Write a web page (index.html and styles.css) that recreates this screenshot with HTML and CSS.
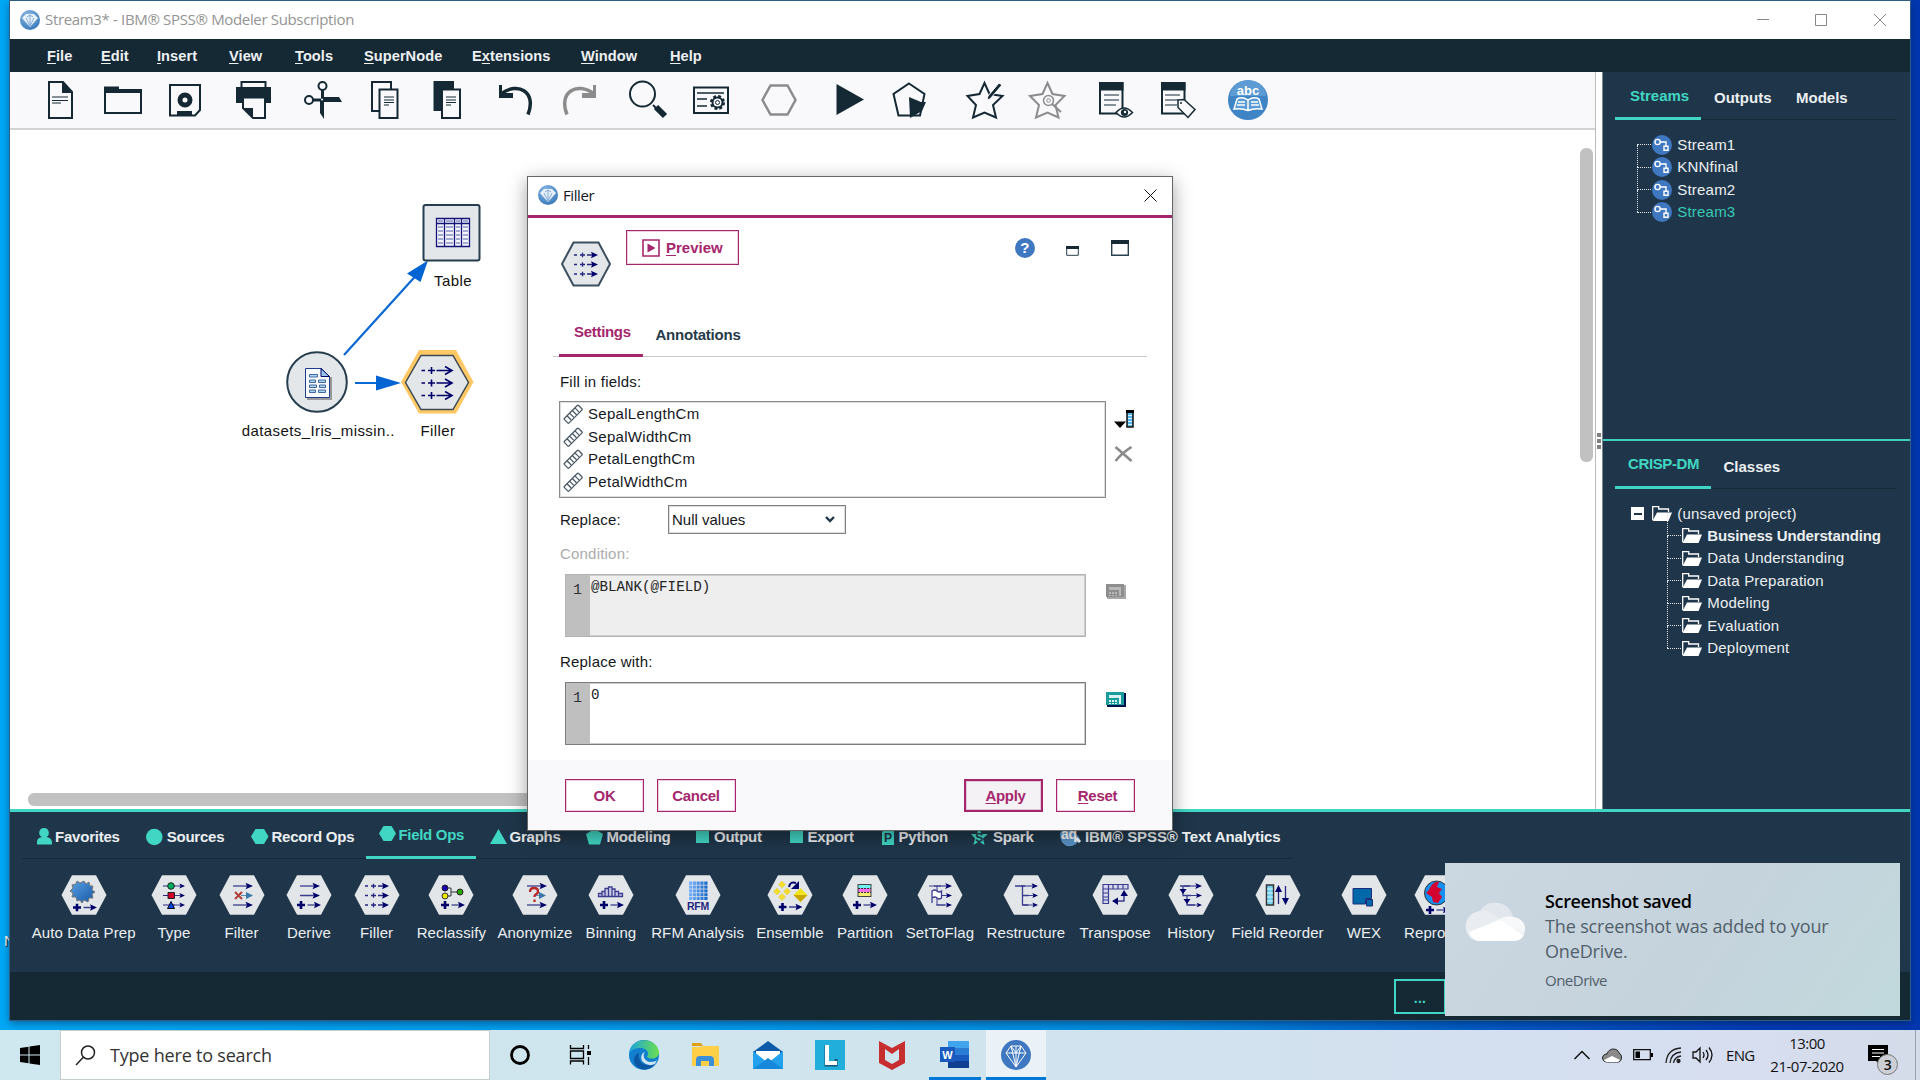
FILE: index.html
```html
<!DOCTYPE html>
<html lang="en">
<head>
<meta charset="utf-8">
<title>Stream3* - IBM SPSS Modeler Subscription</title>
<link rel="stylesheet" href="styles.css">
</head>
<body>
<svg class="defs" width="0" height="0" aria-hidden="true">
  <defs>
    <radialGradient id="ball" cx=".4" cy=".3" r=".8"><stop offset="0" stop-color="#8fbbe6"/><stop offset="1" stop-color="#2f72b4"/></radialGradient>
    <linearGradient id="gearfill" x1="0" y1="0" x2="1" y2="1"><stop offset="0" stop-color="#5aa0e0"/><stop offset="1" stop-color="#1558a8"/></linearGradient>
    <linearGradient id="edgefill" x1="0" y1="0" x2="1" y2="0"><stop offset="0" stop-color="#1ba2dd"/><stop offset="1" stop-color="#6be04e"/></linearGradient>
    <linearGradient id="cellfill" x1="0" y1="0" x2="1" y2="0"><stop offset="0" stop-color="#78b4ff"/><stop offset="1" stop-color="#1666c8"/></linearGradient>
  </defs>
  <symbol id="logo" viewBox="0 0 20 20"><circle cx="10" cy="10" r="10" fill="url(#ball)"/><path d="M6 4h8l4 4-8 9-8-9z" fill="#e8f1fa"/><path d="M6 8l4 8 4-8M10 5v10M7 7l3-2 3 2" fill="none" stroke="#7eaad6"/></symbol>
  <symbol id="hex" viewBox="0 0 46 40"><path d="M.5 20L11 .2h24L45.500 20 35 39.800H11z" fill="#e3e6e9"/></symbol>
  <symbol id="arr" viewBox="0 0 20 8"><path d="M0 4h14" stroke="#3d3d8f" stroke-width="1.300"/><path d="M12.500 .8L20 4l-7.500 3.200 1.500-3.200z" fill="#00006b"/></symbol>
  <symbol id="dasharr" viewBox="0 0 24 8"><path d="M0 4h3M6 4h5M8.500 1.800v4.400M13 4h6" stroke="#26267f" stroke-width="1.300"/><path d="M17 .8L24 4l-7 3.200 1.200-3.200z" fill="#00006b"/></symbol>
  <symbol id="plusarr" viewBox="0 0 24 8"><path d="M0 4h8M4 0v8" stroke="#00006b" stroke-width="2.600"/><path d="M10.500 4h9" stroke="#3d3d8f" stroke-width="1.300"/><path d="M17 .8L24 4l-7 3.200 1.200-3.200z" fill="#00006b"/></symbol>
  <symbol id="stream" viewBox="0 0 20 20"><circle cx="10" cy="10" r="10" fill="#3f78c0"/><g fill="none" stroke="#fff" stroke-width="1.400"><circle cx="5.600" cy="7" r="2.600"/><path d="M8.300 7H14v4M12 11.300h4v4h-4z"/></g></symbol>
  <symbol id="folder" viewBox="0 0 20 15"><path d="M.7 14V.7h6V3h9.800v3" fill="none" stroke="#fff" stroke-width="1.300"/><path d="M5 6.500h15L16.500 15H.5z" fill="#fff"/></symbol>
  <symbol id="ruler" viewBox="0 0 20 20"><g transform="rotate(-45 10 10)" fill="none" stroke="#4a5a66" stroke-width="1.300"><rect x="0" y="7" width="20" height="6.500" rx="1"/><path d="M4.500 7v6M8.200 7v6M12 7v6M15.700 7v6"/></g></symbol>
  <symbol id="calc" viewBox="0 0 20 15"><path d="M1 1h19v14H1z" fill="var(--edge)"/><path d="M0 0h18v13H0z" fill="var(--face)"/><path d="M3 3h10v3H3z" fill="var(--lcd)"/><path d="M3 8h2v2H3zm3 0h2v2H6zm3 0h2v2H9zm4-5h2v9h-2zM3 11h2v1H3zm3 0h2v1H6zm3 0h2v1H9z" fill="var(--lcd)"/></symbol>
</svg>

<span class="desktop-label">N</span>
<div class="window">
  <header class="titlebar">
    <svg width="20" height="20"><use href="#logo"/></svg>
    <span class="title">Stream3* - IBM® SPSS® Modeler Subscription</span>
    <svg class="winctl" width="130" height="14" fill="none" stroke="#888"><path d="M0 6.500h12M58.500 1.500h11v11h-11zM117 1l12 12M129 1l-12 12"/></svg>
  </header>
  <nav class="menu"><span><u>F</u>ile</span><span><u>E</u>dit</span><span><u>I</u>nsert</span><span><u>V</u>iew</span><span><u>T</u>ools</span><span><u>S</u>uperNode</span><span>E<u>x</u>tensions</span><span><u>W</u>indow</span><span><u>H</u>elp</span></nav>

  <div class="work">
    <main class="left">
      <div class="toolbar">
        <svg viewBox="0 0 40 40"><path d="M9 2h14l9 10v26H9z" class="ln"/><path d="M22 1l10 12H22z" class="fl"/><path d="M12 17h16M12 20.500h16M12 23h9" class="thin"/></svg>
        <svg viewBox="0 0 40 40"><path d="M3 10h36v23H3z" class="ln"/><path d="M2 6.500h15v4.500H2zM2 9.500h37V13H2z" class="fl"/></svg>
        <svg viewBox="0 0 40 40"><path d="M5 5h30v25l-5 5.500H5z" class="ln"/><circle cx="20" cy="20" r="5" fill="none" class="ring"/><path d="M12 31h15v4H12z" class="fl"/></svg>
        <svg viewBox="0 0 40 40"><path d="M2 7h35v16H2z" class="fl"/><path d="M7.500 2h24v6h-24zM9 17.500h22v20.500H19L9 28z" class="pn"/><path d="M9 28h10v10z" class="fl"/></svg>
        <svg viewBox="0 0 40 40"><circle cx="20.500" cy="6" r="4" class="ln"/><circle cx="7" cy="20" r="4" class="ln"/><path d="M19 10h3v7h15l3 5H22v17l-4-6V21.500h-7v-3h8z" class="fl"/><circle cx="20" cy="19.500" r="1" fill="#fff"/></svg>
        <svg viewBox="0 0 40 40"><path d="M7 2h19v29H7z" class="ln"/><path d="M14.500 9.500h18V38h-18z" class="pn"/><path d="M19 17h10M19 20h10M19 22.500h10M19 25h5" class="thin"/></svg>
        <svg viewBox="0 0 40 40"><path d="M5.500 1H26v30H5.500z" class="fl"/><path d="M14 9.500h18V38H14z" class="pn"/><path d="M18 17h10M18 20h10M18 22.500h10M18 25h5" class="thin"/></svg>
        <svg viewBox="0 0 40 40"><path d="M5 14C22 1 41 12 32 34.500" class="ln arc"/><path d="M3 5h3v8h11v5H3z" class="fl"/></svg>
        <svg viewBox="0 0 40 40" class="off"><path d="M35 14C18 1-1 12 8 34.500" class="ln arc"/><path d="M37 5h-3v8H23v5h14z" class="fl"/></svg>
        <svg viewBox="0 0 40 40"><circle cx="14.500" cy="14" r="12.500" class="ln"/><path d="M25 25l3 3" class="ln"/><path d="M28 27l9 9" stroke="#152935" stroke-width="6"/></svg>
        <svg viewBox="0 0 40 40"><path d="M3 7.500h34v25.500H3z" class="ln"/><path d="M6 13h27M6 19h10M6 26h10" class="thin wide"/><circle cx="26.500" cy="22.500" r="6" class="gear"/><circle cx="26.500" cy="22.500" r="5" class="ln"/><circle cx="26.500" cy="22.500" r="2" class="thin"/></svg>
        <svg viewBox="0 0 40 40" class="off"><path d="M3.500 20L11.500 5.500h17l8 14.500-8 14.500h-17z" class="ln hexagon"/></svg>
        <svg viewBox="0 0 40 40"><path d="M6.500 4L34 19.500 6.500 35z" class="fl"/></svg>
        <svg viewBox="0 0 40 40"><path d="M20 3.500l15.500 10.500L31 35.500H9.500L4.500 14z" class="ln"/><path d="M20 17l12 5h5l-4 9-12 7z" class="fl"/></svg>
        <svg viewBox="0 0 40 40"><path d="M19.500 3l5 11 13 2-9.500 9 3 12.500-11.500-5-11.500 5 3-12.500L2.500 16l12-2z" class="ln"/><path d="M37 5L25 19l-3 1 1-4L34 3z" class="fl" stroke="#f9f9fb"/></svg>
        <svg viewBox="0 0 40 40" class="off"><path d="M20.500 3l5 11 12 2-9 9 3 12.500-11-5-11.500 5 3-12.500L3 16l12.500-2z" class="ln"/><circle cx="21.500" cy="20.500" r="5" class="pn soft"/><circle cx="21.500" cy="20.500" r="1.800" class="thin"/><path d="M25 24l9 8" class="ln"/></svg>
        <svg viewBox="0 0 40 40"><path d="M4 3.500h22.500v30H4z" class="ln"/><path d="M3 2h24.500v8.500H3z" class="fl"/><path d="M8 15h15M8 20h15M8 25h12" class="thin"/><path d="M20 32.500q8-9 16.500 0-8.500 9-16.500 0z" class="pn soft"/><circle cx="28.500" cy="32.500" r="3.600" class="fl"/><circle cx="29" cy="32" r="1.200" fill="#fff"/></svg>
        <svg viewBox="0 0 40 40"><path d="M3 3.500h22.500v30H3z" class="ln"/><path d="M2 2h24.500v8.500H2z" class="fl"/><path d="M6 15h15M6 20h13M6 25h12" class="thin"/><path d="M19 20l6-.5 11 10-7 8-10-10z" class="pn soft"/><circle cx="22" cy="23" r="1" class="fl"/></svg>
        <svg viewBox="0 0 40 40"><circle cx="20" cy="20" r="20" fill="#3f84c4"/><path d="M2 16C4-5 36-5 38 16z" fill="#6aa5dc" opacity=".7"/><text x="20" y="14.500" class="abc">abc</text><path d="M20 20q-6-4-11-1L6 29q8-1 14 1.500Q26 28 34 29l-3-10q-5-3-11 1v10M10 22h7M9 25h8M23 22h7M23 25h8" fill="#5a9ad6" stroke="#fff" stroke-width="1.500"/></svg>
      </div>
      <div class="canvas">
        <svg class="graph" width="560" height="400" viewBox="0 130 560 400">
          <g transform="translate(-10 0)">
          <path d="M344 355L421 270M355 383h25" stroke="#0a68d2" stroke-width="2.200"/>
          <path d="M428 260.500l-7.500 21.500-13.500-8.500zM401 383l-25-7.500v15z" fill="#0064d2"/>
          <rect x="423.500" y="205" width="56" height="55.500" rx="2" fill="#e3e7ea" stroke="#263e4e" stroke-width="2"/>
          <path d="M436.500 218.500h33v28h-33zM436.500 223.500h33M444.500 218.500v28M454.500 218.500v28M461.500 218.500v28" fill="#f4f5fc" stroke="#14147a" stroke-width="1.300"/>
          <path d="M438 221h5M446 221h7M456 221h4M463 221h5M438 227h5M446 227h7M456 227h4M463 227h5M438 231h5M446 231h7M456 231h4M463 231h5M438 235h5M446 235h7M456 235h4M463 235h5M438 239h5M446 239h7M456 239h4M463 239h5M438 243h5M446 243h7M456 243h4M463 243h5" stroke="#5060a8" stroke-width="1.200"/>
          <circle cx="317" cy="382" r="29.800" fill="#e3e7ea" stroke="#263e4e" stroke-width="2"/>
          <path d="M307 399h24v-22" fill="none" stroke="#999" stroke-width="2"/>
          <path d="M305.500 368.500h16l8 8v21h-24z" fill="#f8fafe" stroke="#1c3c8c"/><path d="M321 368.500v8h8.500z" fill="#9ac4ee" stroke="#00006b"/>
          <path d="M309.500 374.500h8v2.500h-8zM309.500 380h6v2.500h-6zM318.500 380h7v2.500h-7zM309.500 385h7v2.500h-7zM319.500 385h6v2.500h-6zM309.500 390h6v2.500h-6zM318.500 390h7v2.500h-7z" fill="#aad4f4" stroke="#44689c"/>
          <path d="M401 382l18-32h37l17.500 32-17.500 31.500h-37z" fill="#ffc864"/>
          <path d="M405.500 382.500l15.500-27h32l15.500 27-15.500 27h-32z" fill="#e3e7ea" stroke="#3c4a54" stroke-width="1.500"/>
          <g fill="none" stroke="#00006b" stroke-width="1.600"><path d="M421.500 370.500h3.500M428 370.500h7M431.500 367v7M436.500 370.500h14M445 366.500l7 4-7 4"/><path d="M421.500 383h3.500M428 383h7M431.500 379.500v7M436.500 383h14M445 379l7 4-7 4M421.500 395.500h3.500M428 395.500h7M431.500 392v7M436.500 395.500h14M445 391.500l7 4-7 4"/></g>
          <g class="nodelabels"><text x="453" y="286">Table</text><text x="318.300" y="436">datasets_Iris_missin..</text><text x="438" y="436">Filler</text></g>
          </g>
        </svg>
        <i class="vscroll"></i><i class="hscroll"></i>
      </div>
    </main>
    <div class="splitter"><i></i><i></i><i></i></div>
    <aside class="side">
      <section class="pane">
        <div class="tabs side-tabs streams-tabs"><span class="on">Streams</span><span>Outputs</span><span>Models</span></div>
        <ul class="tree flat">
          <li><svg width="20" height="20"><use href="#stream"/></svg>Stream1</li>
          <li><svg width="20" height="20"><use href="#stream"/></svg>KNNfinal</li>
          <li><svg width="20" height="20"><use href="#stream"/></svg>Stream2</li>
          <li class="cur"><svg width="20" height="20"><use href="#stream"/></svg>Stream3</li>
        </ul>
      </section>
      <section class="pane project">
        <div class="tabs side-tabs crisp-tabs"><span class="on">CRISP-DM</span><span>Classes</span></div>
        <div class="root"><i class="minus"></i><svg width="20" height="15"><use href="#folder"/></svg>(unsaved project)</div>
        <ul class="tree nested">
          <li class="strong"><svg width="20" height="15"><use href="#folder"/></svg>Business Understanding</li>
          <li><svg width="20" height="15"><use href="#folder"/></svg>Data Understanding</li>
          <li><svg width="20" height="15"><use href="#folder"/></svg>Data Preparation</li>
          <li><svg width="20" height="15"><use href="#folder"/></svg>Modeling</li>
          <li><svg width="20" height="15"><use href="#folder"/></svg>Evaluation</li>
          <li><svg width="20" height="15"><use href="#folder"/></svg>Deployment</li>
        </ul>
      </section>
    </aside>
  </div>

  <section class="palette">
    <div class="ptabs">
      <span><svg width="18" height="18"><path d="M7 0c6 0 6 8 2.500 9 5 1 5.500 3 5.500 7.500H0C0 12 0 10 5 9 1 8 1 0 7 0z"/></svg>Favorites</span>
      <span><svg width="21" height="18"><circle cx="8.300" cy="9" r="8.300"/></svg>Sources</span>
      <span><svg width="20.500" height="18"><path d="M0 8.500L4.500 1H13l4.500 7.500L13 16H4.500z"/></svg>Record Ops</span>
      <span class="on"><svg width="19.500" height="18"><path d="M0 8.500L4.500 1H12.500l4.500 7.500L12.500 16H4.500z"/></svg>Field Ops</span>
      <span><svg width="19.500" height="18"><path d="M0 16L8.500 1 17 16z"/></svg>Graphs</span>
      <span><svg width="20" height="18"><path d="M0 6L8.500 1 17 6l-3 10.500H3z"/></svg>Modeling</span>
      <span><svg width="18" height="18"><path d="M0 2h13v13H0z"/></svg>Output</span>
      <span><svg width="17.500" height="18"><path d="M0 2h13v13H0z"/></svg>Export</span>
      <span><svg width="16.500" height="18"><path d="M0 4l3-3h9v16H0z"/><text x="6" y="14" class="mini">P</text></svg>Python</span>
      <span><svg width="22" height="18"><path d="M8 0l2.500 6H17l-5 4.500 1.500 6.500L8 13.500 2.500 17 4 10.500 0 6h6z"/><text x="8.200" y="13.500" class="mini">S</text></svg>Spark</span>
      <span class="ta"><svg width="25" height="20"><path d="M0 5q5-7 12-2t8 8l-4 5q-6 4-11 1T0 5z" style="fill:#5b93c8"/><text x="9" y="11" class="mini a">aq</text><path d="M16 10l4 4" stroke="#fff" stroke-width="3"/></svg>IBM® SPSS® Text Analytics</span>
    </div>
    <div class="nodes">
      <figure><svg><use href="#hex"/><path d="M23 6l2 3 3-2 1 4 3 0-1 4 3 2-3 2 1 4-4 0-1 4-4-2-2 3-2-3-3 1-1-4-4 0 1-4-3-2 3-3-1-3 4-1 1-3 3 2z" fill="url(#gearfill)" stroke="#777"/><use href="#plusarr" x="12" y="28.500" width="24" height="8"/></svg>Auto Data Prep</figure>
      <figure><svg><use href="#hex"/><path d="M12 11h12M12 20.500h12M12 30h12" stroke="#26267f"/><use href="#arr" x="19" y="7" width="15" height="8"/><use href="#arr" x="19" y="16.500" width="15" height="8"/><use href="#arr" x="19" y="26" width="15" height="8"/><circle cx="20" cy="11" r="3.300" fill="#00b060" stroke="#222"/><path d="M17 17.500h6.500v6H17z" fill="#d4002c" stroke="#222"/><path d="M16.500 33.500l3.500-7 3.500 7z" fill="#0048d8" stroke="#002"/></svg>Type</figure>
      <figure><svg><use href="#hex"/><use href="#arr" x="14" y="7" width="20" height="8"/><use href="#arr" x="14" y="26" width="20" height="8"/><path d="M22 20.500h8" stroke="#5590bb"/><path d="M27 17l7 3.500-7 3.500z" fill="#3a78a8"/><path d="M16 17l7 7M23 17l-7 7" stroke="#b0403c" stroke-width="2"/></svg>Filter</figure>
      <figure><svg><use href="#hex"/><use href="#arr" x="14" y="7" width="20" height="8"/><use href="#arr" x="14" y="16.500" width="20" height="8"/><use href="#plusarr" x="11" y="26" width="24" height="8"/></svg>Derive</figure>
      <figure><svg><use href="#hex"/><use href="#dasharr" x="11" y="7" width="24" height="8"/><use href="#dasharr" x="11" y="16.500" width="24" height="8"/><use href="#dasharr" x="11" y="26" width="24" height="8"/></svg>Filler</figure>
      <figure><svg><use href="#hex"/><path d="M18 13h5v8h-5M23 17h10" stroke="#333" fill="none"/><circle cx="17" cy="13" r="3" fill="#1800b0" stroke="#222"/><circle cx="17" cy="21" r="3" fill="#f0e800" stroke="#333"/><circle cx="32" cy="17" r="3" fill="#28a800" stroke="#222"/><use href="#plusarr" x="13" y="26" width="24" height="8"/></svg>Reclassify</figure>
      <figure><svg><use href="#hex"/><use href="#arr" x="15" y="7" width="20" height="8"/><use href="#arr" x="15" y="26" width="20" height="8"/><path d="M23 20.500h5" stroke="#5590bb"/><path d="M27 17l7 3.500-7 3.500z" fill="#3a78a8"/><path d="M18 17q0-4 4-4t4 3.500q0 2-2.500 3-1 .5-1 2.500M22.500 24.500v2.500" stroke="#b82828" stroke-width="2.300" fill="none"/></svg>Anonymize</figure>
      <figure><svg><use href="#hex"/><path d="M10.500 21.500v-3H14v-2h3v-3h3.500v-1.500H24V14h3v2.500h3.500v2h4v3zM14 18v3.500M17 16v5M20.500 14v7M24 14v7M27 16v5M30.500 18v3" fill="#c9cae6" stroke="#3d3d8f" stroke-width="1.300"/><use href="#plusarr" x="12" y="26" width="24" height="8"/></svg>Binning</figure>
      <figure><svg><use href="#hex"/><path d="M14 6.500h18.500v18.500H14z" fill="url(#cellfill)"/><path d="M17.500 6v20M21.300 6v20M25 6v20M28.800 6v20M13 10.200h20M13 14h20M13 17.800h20M13 21.500h20" stroke="#e3e6e9" stroke-width=".7"/><text x="23" y="35" class="rfm">RFM</text></svg>RFM Analysis</figure>
      <figure><svg><use href="#hex"/><path d="M15 6l3.500 3.500L15 13l-3.500-3.500zM10 13l3.500 3.500L10 20l-3.500-3.500zM20 13l3.500 3.500L20 20l-3.500-3.500zM15 18.500l3.500 3.500-3.500 3.500-3.500-3.500z" fill="#f4dc2c" stroke="#e8d868"/><path d="M33.500 13l7 7-7 7-7-7z" fill="#f2e420"/><path d="M26.500 20h14l-7 7z" fill="#c8a800"/><path d="M22 12q1-6 7-4" fill="none" stroke="#00006b" stroke-width="2"/><path d="M32 6v8h-8z" fill="#00006b"/><use href="#plusarr" x="11.500" y="28" width="24" height="8"/></svg>Ensemble</figure>
      <figure><svg><use href="#hex"/><path d="M16 9h13v4H16z" fill="#70f0f0"/><path d="M16 13h13v4H16z" fill="#f070e8"/><path d="M16 17h13v4.500H16z" fill="#f8ee70"/><path d="M16 9.500h13M16 21.500h13M16 9v13M29 9v13" stroke="#444"/><path d="M16 13.500h13M16 17.500h13" stroke="#333" stroke-dasharray="2 1"/><use href="#plusarr" x="11" y="26" width="24" height="8"/></svg>Partition</figure>
      <figure><svg><use href="#hex"/><path d="M12 11h12M20 11v19h8" stroke="#3d3d8f" fill="none"/><use href="#arr" x="17" y="7" width="18" height="8"/><use href="#arr" x="19" y="16.500" width="16" height="8"/><use href="#arr" x="19" y="26" width="16" height="8"/><path d="M15 28V16q3-2 5 0t4.500 0v7q-2.500 2-4.500 0t-5 0" fill="#fff" stroke="#3d3d8f" stroke-width="1.300"/></svg>SetToFlag</figure>
      <figure><svg><use href="#hex"/><path d="M12 11h10M19.500 11v19h6M19.500 20.500h6" stroke="#3d3d8f" stroke-width="1.300" fill="none"/><use href="#arr" x="18" y="7" width="17" height="8"/><use href="#arr" x="20" y="16.500" width="15" height="8"/><use href="#arr" x="20" y="26" width="15" height="8"/></svg>Restructure</figure>
      <figure><svg><use href="#hex"/><path d="M11 9.500h25V14H16.500v14.500H11zM11 14h6M11 18h6M11 22h6M11 25h6M16.500 9.500V14M21 9.500V14M26 9.500V14M31 9.500V14" fill="#d6d6ee" stroke="#3d3d8f" stroke-width="1.200"/><path d="M32 17v9H22" fill="none" stroke="#3d3d8f" stroke-width="1.500"/><path d="M28.500 21l3.500-6 4 6zM26 22.500V30l-6-4z" fill="#00006b"/></svg>Transpose</figure>
      <figure><svg><use href="#hex"/><path d="M12 11h10M15 11v9.500h8M19 21v9h8" stroke="#3d3d8f" stroke-width="1.300" fill="none"/><path d="M11.500 14h7L15 19zM15.500 24h7L19 29z" fill="#00006b"/><use href="#arr" x="16" y="7" width="18" height="8"/><use href="#arr" x="18" y="16.500" width="16" height="8"/><use href="#arr" x="20" y="26" width="14" height="8"/></svg>History</figure>
      <figure><svg><use href="#hex"/><path d="M11.500 10h7v20h-7z" fill="#78d2ee" stroke="#333" stroke-width="1.500"/><path d="M12 14h6M12 18h6M12 22h6M12 26h6" stroke="#d4f4fc"/><path d="M23.500 29V13M30.500 11v15" stroke="#26267f" stroke-width="1.300"/><path d="M20 17l3.500-7 3.500 7zM27 23l3.500 7 3.500-7z" fill="#00006b"/></svg>Field Reorder</figure>
      <figure><svg><use href="#hex"/><path d="M12 13.500h18.500v10h-6V29H12z" fill="#0068a8" stroke="#1c2c78"/><path d="M25.500 24.500h6v6.500h-6z" fill="#0068a8" stroke="#1c2c78"/></svg>WEX</figure>
      <figure><svg><use href="#hex"/><circle cx="22.500" cy="18" r="12" fill="#1490f0" stroke="#333"/><path d="M12 18q3-2 5-7 4-5 8-4l-2 5 5 2-3 4 3 4-4 6-5-1-1-5z" fill="#d40030"/><use href="#plusarr" x="12" y="31" width="24" height="8"/></svg>Reproject</figure>
    </div>
  </section>
  <footer class="status"><span class="more">...</span></footer>
</div>

<div class="dialog">
  <header><svg width="20" height="20"><use href="#logo"/></svg><span class="title">Filler</span><svg class="x" width="13" height="13"><path d="M.5.5l12 12M12.500.5l-12 12" stroke="#111"/></svg></header>
  <div class="dhead">
    <svg class="dhex" width="50" height="46" viewBox="0 0 50 46"><path d="M1 23L12.500 1.500h25L49 23 37.500 44.500h-25z" fill="#e3e7ea" stroke="#3c5060" stroke-width="2"/><use href="#dasharr" x="13" y="10" width="24" height="8"/><use href="#dasharr" x="13" y="19.500" width="24" height="8"/><use href="#dasharr" x="13" y="29" width="24" height="8"/></svg>
    <button class="preview"><svg width="18" height="18"><path d="M1 1h16v16H1z" fill="none" stroke="#a6266e" stroke-width="1.600"/><path d="M5.500 4.500l8 4.500-8 4.500z" fill="#a6266e"/></svg><span><u>P</u>review</span></button>
    <span class="help">?</span>
    <svg class="min" width="13" height="10"><path d="M.7.7h11.600v8.600H.7z" fill="#fff" stroke="#2a4050"/><path d="M0 0h13v3H0z" fill="#152935"/></svg>
    <svg class="max" width="18" height="16"><path d="M.7.7h16.600v14.600H.7z" fill="#fff" stroke="#2a4050" stroke-width="1.400"/><path d="M0 0h18v4H0z" fill="#152935"/></svg>
  </div>
  <div class="tabs dtabs"><span class="on">Settings</span><span>Annotations</span></div>
  <div class="dbody">
    <label>Fill in fields:</label>
    <div class="row fields">
      <ul class="list">
        <li><svg width="20" height="20"><use href="#ruler"/></svg>SepalLengthCm</li>
        <li><svg width="20" height="20"><use href="#ruler"/></svg>SepalWidthCm</li>
        <li><svg width="20" height="20"><use href="#ruler"/></svg>PetalLengthCm</li>
        <li><svg width="20" height="20"><use href="#ruler"/></svg>PetalWidthCm</li>
      </ul>
      <div class="tools">
        <svg width="20" height="18"><path d="M0 11.500h12L6 18z"/><path d="M13 1h6v16h-6z" fill="#58b8ec" stroke="#111" stroke-width="1.500"/><path d="M12 0h8v3h-8z"/><path d="M14 5.500h4M14 8.500h4M14 11.500h4M14 14.500h4" stroke="#d8f0fc"/></svg>
        <svg width="19" height="16"><path d="M1.500 1q7 6 16 14M17.500 1Q8 7 1.500 15" fill="none" stroke="#8a8a8a" stroke-width="2.600"/></svg>
      </div>
    </div>
    <div class="row replace"><label>Replace:</label><div class="select">Null values<svg width="10" height="7"><path d="M1 1l4 4 4-4" fill="none" stroke="#20384a" stroke-width="2.400"/></svg></div></div>
    <label class="dis">Condition:</label>
    <div class="row code-row"><div class="code off"><b>1</b><code>@BLANK(@FIELD)</code></div><svg class="calc gray" width="20" height="15"><use href="#calc"/></svg></div>
    <label class="with">Replace with:</label>
    <div class="row code-row second"><div class="code"><b>1</b><code>0</code></div><svg class="calc" width="20" height="15"><use href="#calc"/></svg></div>
  </div>
  <footer><button>OK</button><button>Cancel</button><button class="apply"><span><u>A</u>pply</span></button><button class="reset"><span><u>R</u>eset</span></button></footer>
</div>

<div class="toast">
  <svg width="60" height="40"><path d="M15 39C-4 39-4 11 15 9 23-4 44-1 48 15c16 1 16 24 0 24z" fill="#e9edf1"/><path d="M15 9q8-2 15 5l18 12L48 15C44-1 23-4 15 9z" fill="#e1e7ec"/><path d="M4 30l29-12q6-5 15-3 15 3 11 16L33 19z" fill="#f6f8fa"/><path d="M4 30l31-12 24 15q-3 6-11 6H15Q7 39 4 30z" fill="#fff"/></svg>
  <div><h2>Screenshot saved</h2><p>The screenshot was added to your<br>OneDrive.</p><small>OneDrive</small></div>
</div>

<footer class="taskbar">
  <svg class="start" width="20" height="20"><path d="M0 3l8.500-1.200v7.700H0zM9.500 1.600L20 0v9.500H9.500zM0 10.500h8.500v7.700L0 17zM9.500 10.500H20V20L9.500 18.400z"/></svg>
  <div class="search"><svg width="21" height="21"><circle cx="13" cy="7.500" r="6.500" fill="none" stroke="#222" stroke-width="1.500"/><path d="M8.500 12L1 20" stroke="#222" stroke-width="1.500"/></svg>Type here to search</div>
  <div class="apps">
    <svg viewBox="0 0 30 30"><circle cx="15" cy="15" r="8.500" fill="none" stroke="#000" stroke-width="2.800"/></svg>
    <svg viewBox="0 0 30 30"><path d="M5.500 5v3.500h13V5M5.500 24.500V21h13v3.500M5.500 11h13v7.500h-13zM23.500 5v4M23.500 17v8" fill="none" stroke="#000" stroke-width="1.300"/><path d="M22 11h4v4h-4z"/></svg>
    <svg viewBox="0 0 30 30"><circle cx="15" cy="15" r="15" fill="#127fce"/><path d="M0 14C1-4 28-4 30 12c0 7-8 8-12 5 3-5-1-9-7-9C6 8 2 10 0 14z" fill="url(#edgefill)"/><path d="M10 13c-2 9 6 15 16 11-8 10-22 5-21-5q1-5 5-6z" fill="#0c57a4"/><path d="M16 12c-3 3-1 9 5 10 4 0 6-1 7-2l-2 4q-7 3-12-2c-3-3-2-9 2-10z" fill="#d0e4f0"/></svg>
    <svg viewBox="0 0 30 30"><path d="M2 4q0-1 1-1h8l2 3H2z" fill="#e0a010"/><path d="M2 7h9l2-1h16v20H2z" fill="#ffcf48"/><path d="M6 26v-6q0-4 4-4h10q4 0 4 4v6h-5v-5h-8v5z" fill="#3b8ed8"/></svg>
    <svg viewBox="0 0 30 30"><path d="M0 12L15 1l15 11v17H0z" fill="#0c5aaa"/><path d="M3 11h24v10H3z" fill="#fff"/><path d="M0 11l15 12 15-12v18H0z" fill="#22a2ec"/><path d="M0 29l15-11 15 11z" fill="#1688dc"/></svg>
    <svg viewBox="0 0 30 30"><path d="M0 0h30v30H0z" fill="#22aedb"/><path d="M11 5v20h10v-6" fill="none" stroke="#155878" stroke-width="3"/><path d="M10 5h4v16h8v4H10z" fill="#fff"/></svg>
    <svg viewBox="0 0 30 30"><path d="M2 1l13 7 13-7v22l-13 7-13-7zM8 9v11l7 4 7-4V9l-7 5z" fill="#c62e30" fill-rule="evenodd"/></svg>
    <svg viewBox="0 0 30 30"><path d="M8 1h20q1 0 1 1v7H8z" fill="#41a5ee"/><path d="M8 8h21v7H8z" fill="#2b7cd3"/><path d="M8 15h21v6H8z" fill="#185abd"/><path d="M8 21h21v7H8z" fill="#103f91"/><path d="M0 7h15v15H0z" fill="#185abd"/><text x="7.500" y="19" class="w">W</text></svg>
    <svg viewBox="0 0 30 30"><circle cx="15" cy="15" r="15" fill="#3f78c0"/><path d="M10 6h10l5 7-10 14L5 13zM5 13h20M10 6l5 21 5-21M15 6v21M10 6l5 7 5-7" fill="none" stroke="#fff" stroke-width="1"/></svg>
  </div>
  <div class="tray">
    <svg width="16" height="10"><path d="M.5 9L8 1.500 15.500 9" fill="none" stroke="#111" stroke-width="1.500"/></svg>
    <svg width="20" height="15"><path d="M5 14C-1 14-1 6 5 6c2-7 11-6 12-1 4 2 3 9-1 9z" fill="#8a8a8a" stroke="#222"/><path d="M2 12l8-4 8 4q-1 2-3 2H5q-2 0-3-2z" fill="#fff"/></svg>
    <svg width="20" height="12"><path d="M.7.7h16.600v10H.7z" fill="none" stroke="#111" stroke-width="1.300"/><path d="M2.500 2.500h4.500v6.500H2.500zM18 4h2v4h-2z"/></svg>
    <svg width="17" height="17" fill="none" stroke="#222" stroke-width="1.300"><path d="M1 16Q2 2 16 1M5 16q1-10 11-11M8.500 16q1-6 7.500-7"/><circle cx="13.500" cy="14" r="1.500" fill="#111"/></svg>
    <svg width="22" height="18" fill="none" stroke="#111" stroke-width="1.300"><path d="M1 6h3l4-4v14l-4-4H1zM11 6q2 3 0 6M14 4q4 5 0 10M17 1.500q6 7.500 0 15"/></svg>
    <span class="eng">ENG</span>
    <div class="clock"><span>13:00</span><span>21-07-2020</span></div>
    <div class="action"><svg width="21" height="21"><path d="M0 0h20v16h-7v5l-5-5H0z"/><path d="M4 4.500h12M4 8h12M4 11.500h8" stroke="#fff"/></svg><b>3</b></div>
  </div>
</footer>
</body>
</html>
```
FILE: styles.css
```css
* { box-sizing: border-box; }
body {
  margin: 0; width: 1920px; height: 1080px; overflow: hidden; position: relative;
  display: flex; flex-direction: column;
  font: 15px/18px "Liberation Sans", Arial, sans-serif; letter-spacing: .2px;
  background: linear-gradient(90deg, #00a8f5 0, #009cec 35%, #008ce0 60%, #0060c8 75%, #003cb4 92%, #0038b0);
}
svg { display: block; flex: none; }
.defs { position: absolute; }
ul { list-style: none; margin: 0; padding: 0; }
u { text-underline-offset: 2px; text-decoration-thickness: 1px; }
.title { font-family: "Open Sans", "Noto Sans", sans-serif; }
.desktop-label { position: absolute; left: 4px; top: 932px; color: #fff; text-shadow: 1px 1px 1px #000; }

/* main window */
.window { position: relative; margin: 1px 10px 0; width: 1900px; height: 1019px; background: #152935; display: flex; flex-direction: column; outline: 1px solid #2d5f86; box-shadow: 0 3px 8px rgba(0,20,60,.5); }
.titlebar { height: 38px; background: #fff; display: flex; align-items: center; padding: 0 23px 1px 10px; }
.titlebar .title { margin: -2px 0 0 5px; color: #949494; font-size: 15px; letter-spacing: -.34px; }
.winctl { margin-left: auto; }
.menu { height: 33px; padding-left: 37px; color: #eef1f3; font-weight: bold; font-size: 14.600px; line-height: 34px; letter-spacing: .05px; display: grid; grid-template-columns: 54px 56px 72px 66px 69px 108px 109px 89px 60px; }
.work { display: flex; height: 737px; }
.left { width: 1586px; display: flex; flex-direction: column; background: #fff; border-right: 1px solid #bbb; }
.toolbar { height: 58px; background: #f9f9fb; border-bottom: 2px solid #d2d2d4; padding: 8px 0 0 29.500px; display: grid; grid-template-columns: 62px 63px 69px 68px 63px 63px 68px 63px 69px 63px 68px 71px 59px 76px 62px 69px 63px 69px 40px; color: #152935; }
.toolbar svg { width: 40px; height: 40px; }
.toolbar .off { color: #8c8c8c; }
.ln, .pn { stroke: currentColor; stroke-width: 2; fill: none; }
.pn { fill: #f9f9fb; }
.fl { fill: currentColor; }
.arc { stroke-width: 3.500; }
.hexagon { stroke-width: 2.500; }
.ring { stroke: currentColor; stroke-width: 5; }
.soft { stroke-width: 1.500; }
.thin { stroke: currentColor; stroke-width: 1; fill: none; }
.wide { stroke-width: 1.500; }
.gear { fill: #f9f9fb; stroke: currentColor; stroke-width: 3; stroke-dasharray: 2.700 2; }
.abc { font: bold 13px "Liberation Sans", sans-serif; fill: #fff; text-anchor: middle; letter-spacing: 0; }
.canvas { position: relative; flex: 1; }
.nodelabels { font: 15px "Liberation Sans", sans-serif; letter-spacing: .4px; text-anchor: middle; fill: #111; }
.vscroll, .hscroll { position: absolute; background: #c1c1c1; border-radius: 6px; }
.vscroll { right: 2px; top: 18px; width: 13px; height: 314px; }
.hscroll { left: 18px; bottom: 3px; width: 900px; height: 13px; }
.splitter { width: 7px; background: #fff; border-right: 1px solid #7d868c; display: flex; flex-direction: column; gap: 2px; padding: 361px 0 0 1px; }
.splitter i { width: 4px; height: 4px; background: #808080; }
.side { flex: 1; background: #1f364a; color: #eceff1; }
.pane { padding-left: 12px; height: 367px; }
.project { height: 370px; border-top: 2px solid #3dd0bf; }
.tabs { display: flex; font-weight: bold; letter-spacing: 0; }
.side-tabs { width: 282px; height: 48px; box-shadow: inset 0 -1px #172a38; }
.side-tabs span { padding-top: 17px; }
.side-tabs .on { color: #41d6c3; border-bottom: 3px solid #41d6c3; padding-top: 15px; padding-left: 15px; }
.streams-tabs .on { width: 86px; margin-right: 13px; }
.streams-tabs span + span + span { margin-left: 24.500px; }
.crisp-tabs .on { width: 96px; padding: 14px 0 0 13px; margin-right: 12.500px; letter-spacing: -.38px; }
.tree li { height: 22.500px; display: flex; align-items: center; position: relative; gap: 5.300px; }
.flat { margin: 13.500px 0 0 22px; padding-left: 15px; }
.flat li::before, .nested li::before { content: ""; position: absolute; left: -15px; width: 14px; top: 10.500px; border-top: 1px dotted #dfe4e8; }
.flat li + li::after, .nested li::after { content: ""; position: absolute; left: -15px; height: 22.500px; top: -11.500px; border-left: 1px dotted #dfe4e8; }
.cur { color: #38c9b3; }
.root { display: flex; align-items: center; gap: 5.300px; height: 22px; margin: 13.500px 0 0 16px; }
.minus { width: 13px; height: 13px; background: #fff; margin-right: 2.700px; display: grid; place-items: center; }
.minus::before { content: ""; width: 8px; height: 2px; background: #1f364a; }
.nested { margin-left: 52px; padding-left: 15px; }
.strong { font-weight: bold; letter-spacing: -.15px; }

/* palette */
.palette { height: 163px; background: #1f364a; border-top: 3px solid #41d6c3; color: #eceff1; }
.ptabs { height: 47px; margin-left: 12px; width: 1270px; padding-left: 15px; box-shadow: inset 0 -1px #172a38; display: grid; grid-template-columns: 108.700px 105.300px 128px 111px 96.500px 109.500px 94px 92px 89px 89px 230px; font-weight: bold; letter-spacing: -.22px; white-space: nowrap; }
.ptabs > span { display: flex; padding-top: 16px; }
.ptabs .ta { letter-spacing: -.1px; }
.ptabs .on { color: #41d6c3; padding-top: 14px; margin-left: -13px; padding-left: 13px; width: 110px; border-bottom: 3px solid #41d6c3; letter-spacing: -.3px; }
.ptabs svg { fill: #41d6c3; overflow: visible; }
.ptabs .on svg { margin-top: -1px; }
.ptabs .mini { font: bold 12px "Liberation Sans", sans-serif; fill: #1f364a; text-anchor: middle; }
.ptabs .a { fill: #fff; font-size: 14px; }
.nodes { margin: 16px 0 0 14px; display: grid; grid-template-columns: 119.400px 61px 74.400px 60.400px 75px 74.400px 92.800px 59.200px 114.200px 70.400px 79.600px 70.400px 101.600px 77px 74.400px 99px 73.600px 71.800px; }
figure { margin: 0; display: flex; flex-direction: column; align-items: center; gap: 9px; white-space: nowrap; letter-spacing: .1px; }
figure > svg { width: 46px; height: 40px; }
.rfm { font: bold 10.500px "Liberation Sans", sans-serif; text-anchor: middle; fill: #26267f; letter-spacing: -.3px; }
.status { flex: 1; display: flex; padding: 7px 0 0 1384px; }
.more { width: 52px; height: 35px; border: 2px solid #41d6c3; color: #41d6c3; font-weight: bold; font-size: 14px; text-align: center; line-height: 34px; }

/* filler dialog */
.dialog { position: absolute; left: 527px; top: 176px; width: 646px; height: 655px; background: #fff; border: 1px solid #666; box-shadow: 0 5px 18px rgba(0,0,0,.38); display: flex; flex-direction: column; color: #14171c; }
.dialog header { height: 41px; border-bottom: 3px solid #a6266e; display: flex; align-items: center; padding: 0 15px 2px 10px; }
.dialog .title { margin: -1px 0 0 5px; letter-spacing: -.4px; font-size: 15px; }
.dialog .x { margin-left: auto; }
.dhead { height: 90px; padding: 12px 18px 0 33px; display: flex; align-items: flex-start; }
.dhex { margin-top: 11px; }
button { font: bold 15px/18px "Liberation Sans", Arial, sans-serif; color: #a6266e; background: #fff; border: 1px solid #a6266e; box-shadow: inset 0 0 0 1px rgba(166,38,110,.22); padding: 0; letter-spacing: -.3px; }
.preview { display: flex; align-items: center; gap: 6px; width: 113px; height: 35px; margin-left: 15px; padding-left: 15px; letter-spacing: 0; }
.help { margin: 8px 0 0 276px; width: 20px; height: 20px; border-radius: 50%; background: #3f78c0; color: #fff; font-weight: bold; text-align: center; line-height: 20px; }
.min { margin: 16px 0 0 31px; }
.max { margin: 10px 0 0 32px; }
.dtabs { height: 49px; margin-left: 25px; width: 594px; padding-left: 6px; box-shadow: inset 0 -1px #c8c8c8; color: #263a48; }
.dtabs span { padding-top: 18px; letter-spacing: -.22px; }
.dtabs .on { width: 84px; padding: 15px 0 0 15px; margin-right: 12.500px; color: #a6266e; border-bottom: 3px solid #a6266e; letter-spacing: -.3px; }
.dbody { padding: 16px 0 0 32px; height: 403px; display: flex; flex-direction: column; }
.row { display: flex; }
.fields { margin: 10px 0 0 -1px; }
.list { width: 547px; height: 97px; border: 1px solid #8a8a8a; box-shadow: inset 0 0 0 1px #ddd; padding: 1px 3px; }
.list li { display: flex; gap: 5px; align-items: center; height: 22.500px; letter-spacing: .3px; }
.tools { padding: 9px 0 0 8px; display: flex; flex-direction: column; gap: 18px; }
.replace { margin-top: 7px; align-items: center; }
.replace label { width: 108px; }
.select { width: 178px; height: 29px; border: 1px solid #808080; box-shadow: inset 0 0 0 1px #ddd; padding: 0 10px 0 3px; display: flex; align-items: center; justify-content: space-between; letter-spacing: 0; }
.dis { margin-top: 11px; color: #ababab; }
.code-row { margin: 11px 0 0 5px; gap: 20px; }
.code { width: 521px; height: 63px; border: 1px solid #7c7c7c; box-shadow: inset 0 0 0 1px #ccc; display: flex; letter-spacing: 0; font-family: "Liberation Mono", monospace; }
.code.off { background: #eee; border-color: #b4b4b4; }
.code b { width: 24px; background: #bfbfbf; font-weight: normal; font-size: 15px; padding: 7px 0 0 7px; color: #333; }
.code code { font: 14.200px/18px "Liberation Mono", monospace; padding: 3px 0 0 1px; color: #222; }
.calc { margin-top: 10px; --face: #1a9c9c; --edge: #00104c; --lcd: #d8f4f4; }
.gray { --face: #8e8e8e; --edge: #a8a8a8; --lcd: #b8b8b8; }
.with { margin-top: 16px; }
.second { margin-top: 11px; }
.dialog footer { flex: 1; background: #f9f9fb; display: flex; padding: 19px 0 0 37px; }
.dialog footer button { width: 79px; height: 33px; margin-right: 12.500px; }
.dialog footer .apply { margin-left: 216px; border: 2px solid #a6266e; background: #f4f2f5; padding-left: 4px; }
.dialog footer .reset { padding-left: 5px; }

/* notification */
.toast { position: absolute; left: 1445px; top: 863px; width: 455px; height: 153px; background: linear-gradient(125deg, #cbd7e1, #c5d3dd 55%, #c1d9dc); display: flex; gap: 20px; padding: 26px 0 0 20px; font: 18px/25px "Open Sans", "Noto Sans", sans-serif; color: #51606a; letter-spacing: 0; }
.toast svg { margin-top: 13px; }
.toast h2 { margin: 0; font: 600 18px/25px "Open Sans", sans-serif; color: #000; letter-spacing: -.35px; }
.toast p { margin: 0; letter-spacing: -.15px; }
.toast small { display: block; font-size: 15px; line-height: 20px; margin-top: 6px; letter-spacing: -.5px; }

/* taskbar */
.taskbar { margin-top: auto; height: 50px; background: linear-gradient(90deg, #cfe7ee, #d0e4ee 50%, #d6def0 90%, #d4dcea); display: flex; align-items: center; font-family: "Open Sans", "Noto Sans", sans-serif; letter-spacing: -.3px; color: #111; position: relative; }
.start { margin-left: 20px; }
.search { margin-left: 20px; width: 430px; height: 50px; background: #fff; border: 1px solid #c4ccd0; display: flex; align-items: center; gap: 14px; padding-left: 14px; font-size: 18px; letter-spacing: -.2px; color: #333; }
.apps { display: grid; height: 50px; padding-left: 15px; grid-template-columns: 59.500px 64.500px 61px 62.500px 62.500px 61.500px 58px 51px 61px; }
.apps svg { width: 30px; height: 30px; margin: 10px 0; }
.apps svg:nth-child(n+8) { box-sizing: content-box; margin: 0; padding: 10px 15px 7px; border-bottom: 3px solid #0078d7; }
.apps svg:nth-child(8) { margin-left: -6px; padding: 10px 11px 7px; }
.apps svg:nth-child(9) { background: #eaf2f7; }
.w { font: bold 11px "Liberation Sans", sans-serif; fill: #fff; text-anchor: middle; letter-spacing: 0; }
.tray { position: absolute; left: 1574px; top: 0; height: 50px; width: 342px; border-right: 1px solid #9aa3b0; display: flex; align-items: center; }
.tray > svg:nth-child(2) { margin-left: 12px; }
.tray > svg:nth-child(3) { margin-left: 11px; }
.tray > svg:nth-child(4) { margin-left: 12px; }
.tray > svg:nth-child(5) { margin-left: 10px; }
.eng { margin-left: 12px; font-size: 15px; width: 28px; letter-spacing: -.7px; }
.clock { width: 100px; margin-left: 3px; display: flex; flex-direction: column; text-align: center; font-size: 15px; line-height: 23px; letter-spacing: -.5px; }
.action { position: relative; margin-left: 11px; }
.action b { position: absolute; left: 9px; top: 9px; width: 21px; height: 21px; border-radius: 50%; border: 1px solid #777; background: #ccd0d6; font: 600 14px/19px "Open Sans", sans-serif; text-align: center; }
```
